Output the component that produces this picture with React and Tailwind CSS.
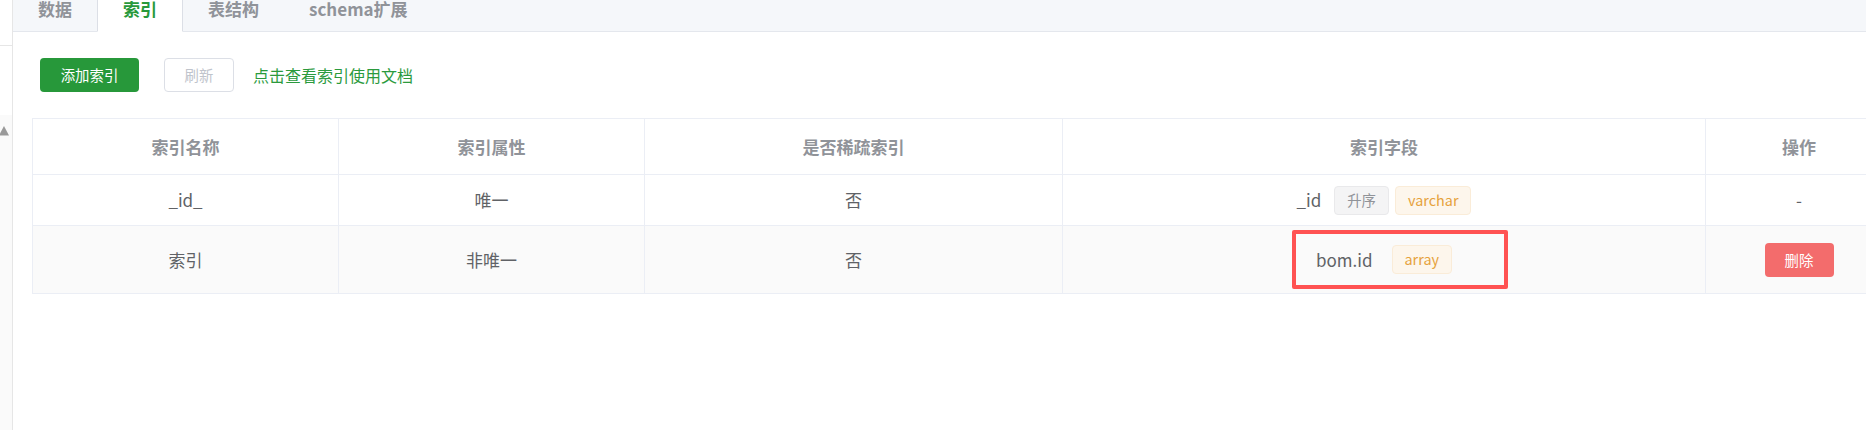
import React from 'react'

const cols = 'grid grid-cols-[306px_306px_418px_643px_186px]'

const Tag = ({ children, tone = 'info', className = '' }) => {
  const tones = {
    info: 'bg-[#f4f4f5] border-[#e9e9eb] text-[#909399]',
    warning: 'bg-[#fdf6ec] border-[#faecd8] text-[#e6a23c]',
  }
  return (
    <span className={`inline-flex h-[29px] items-center rounded-[4px] border px-[12px] text-[14.4px] leading-none ${tones[tone]} ${className}`}>
      {children}
    </span>
  )
}

const Cell = ({ children, last, className = '' }) => (
  <div className={`flex items-center justify-center ${last ? '' : 'border-r border-[#ebeef5]'} ${className}`}>
    {children}
  </div>
)

export default function App() {
  const tabs = ['数据', '索引', '表结构', 'schema扩展']

  return (
    <div className="flex h-[430px] w-full overflow-hidden bg-white font-['Noto_Sans_CJK_SC','Noto_Sans',sans-serif]">
      {/* 左侧窄条 */}
      <div className="flex w-[13px] shrink-0 flex-col border-r border-[#e6e6e6]">
        <div className="h-[46px] border-b border-[#e6e6e6]" />
        <div className="h-[69px]" />
        <div className="flex-1 bg-[#fafafa] pt-[11px]">
          <svg width="10" height="10" viewBox="0 0 10 10">
            <polygon points="4,0 9,9.5 -1,9.5" fill="#999" />
          </svg>
        </div>
      </div>

      <div className="flex min-w-0 flex-1 flex-col">
        {/* 标签页 */}
        <div className="-mt-[17px] flex h-[49px] shrink-0 bg-[#f5f7fa]">
          {tabs.map((t) => {
            const active = t === '索引'
            return (
              <div
                key={t}
                className={`flex items-center border-b px-[25px] pt-[4px] text-[17px] font-semibold ${
                  active
                    ? 'border-x border-x-[#dcdfe6] border-b-white bg-white text-[#28993b]'
                    : 'border-b-[#e4e7ed] text-[#909399]'
                }`}
              >
                {t}
              </div>
            )
          })}
          <div className="flex-1 border-b border-[#e4e7ed]" />
        </div>

        {/* 工具栏 */}
        <div className="ml-[27px] mt-[26px] flex items-center">
          <button className="h-[34px] w-[99px] rounded-[4px] bg-[#27983a] text-[14.4px] text-white">
            添加索引
          </button>
          <button
            disabled
            className="ml-[25px] h-[34px] w-[70px] rounded-[4px] border border-[#dcdfe6] bg-white text-[14.4px] text-[#c0c4cc]"
          >
            刷新
          </button>
          <a href="#" className="ml-[19px] text-[16px] text-[#2b9a3d]">
            点击查看索引使用文档
          </a>
        </div>

        {/* 索引表格 */}
        <div className="ml-[19px] mt-[26px] w-[1860px] shrink-0 border-l border-t border-[#ebeef5] text-[17px]">
          <div className={`${cols} h-[56px] border-b border-[#ebeef5] font-bold text-[#909399]`}>
            <Cell>索引名称</Cell>
            <Cell>索引属性</Cell>
            <Cell>是否稀疏索引</Cell>
            <Cell>索引字段</Cell>
            <Cell last>操作</Cell>
          </div>

          <div className={`${cols} h-[51px] border-b border-[#ebeef5] text-[#606266]`}>
            <Cell>_id_</Cell>
            <Cell>唯一</Cell>
            <Cell>否</Cell>
            <Cell>
              <span>_id</span>
              <Tag className="ml-[13px]">升序</Tag>
              <Tag tone="warning" className="ml-[6px]">varchar</Tag>
            </Cell>
            <Cell last>-</Cell>
          </div>

          <div className={`${cols} h-[68px] border-b border-[#ebeef5] bg-[#fafafa] text-[#606266]`}>
            <Cell>索引</Cell>
            <Cell>非唯一</Cell>
            <Cell>否</Cell>
            <Cell className="relative">
              <span>bom.id</span>
              <Tag tone="warning" className="ml-[19px]">array</Tag>
              {/* 标注框 */}
              <div className="absolute left-[229px] top-[4px] h-[59px] w-[216px] rounded-[2px] border-4 border-[#ff5252]" />
            </Cell>
            <Cell last>
              <button className="h-[34px] w-[69px] rounded-[4px] bg-[#f36c6c] text-[14.4px] text-white">
                删除
              </button>
            </Cell>
          </div>
        </div>
      </div>
    </div>
  )
}
